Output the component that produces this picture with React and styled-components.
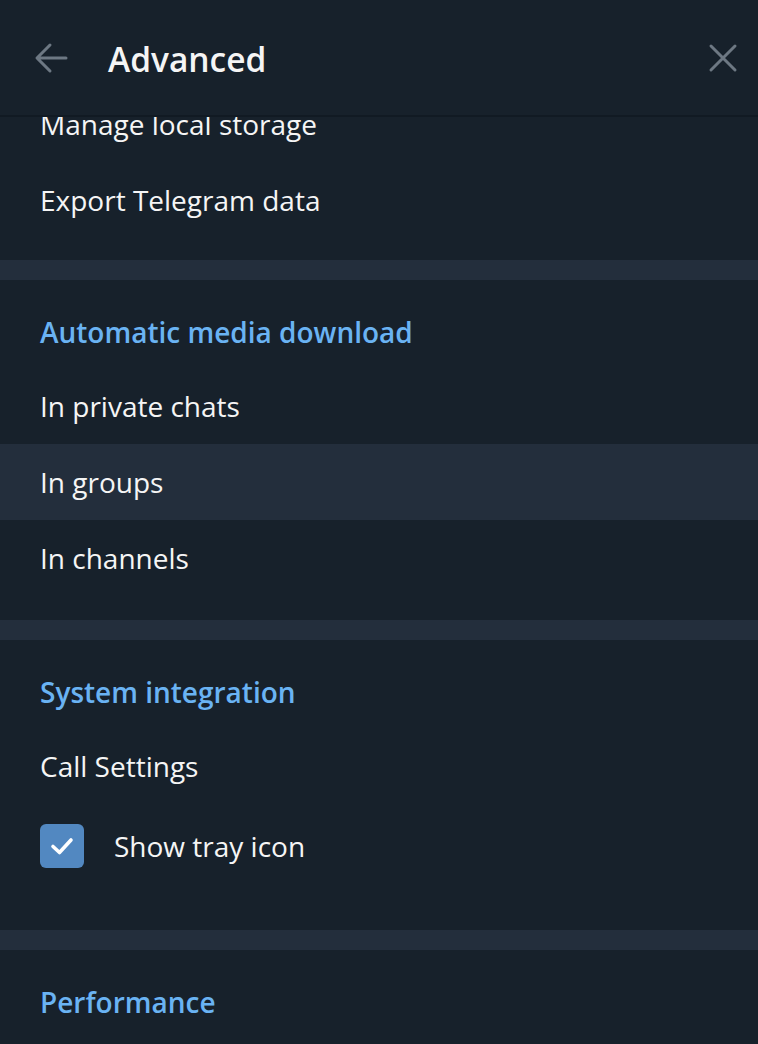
import React, { useState } from "react";
import styled, { createGlobalStyle } from "styled-components";

const GlobalStyle = createGlobalStyle`
  html, body {
    margin: 0;
    padding: 0;
    background: #17212b;
  }
  body {
    font-family: "Open Sans", "Noto Sans", sans-serif;
    -webkit-font-smoothing: antialiased;
  }
`;

const sections = [
  {
    rows: ["Manage local storage", "Export Telegram data"],
  },
  {
    title: "Automatic media download",
    rows: ["In private chats", "In groups", "In channels"],
  },
  {
    title: "System integration",
    rows: ["Call Settings"],
    checks: [{ label: "Show tray icon", checked: true }],
  },
  {
    title: "Performance",
    rows: [],
  },
];

const App = () => {
  const [hovered, setHovered] = useState("In groups");
  const [checks, setChecks] = useState({ "Show tray icon": true });

  return (
    <>
      <GlobalStyle />
      <Panel>
        <Header>
          <IconButton aria-label="Back">
            <svg width="34" height="32" viewBox="0 0 34 32" fill="none">
              <path
                d="M32 16H4M16 3L3 16l13 13"
                stroke="#6d7883"
                strokeWidth="3"
                strokeLinecap="round"
                strokeLinejoin="round"
              />
            </svg>
          </IconButton>
          <Title>Advanced</Title>
          <CloseButton aria-label="Close">
            <svg width="30" height="30" viewBox="0 0 30 30" fill="none">
              <path
                d="M3 3l24 24M27 3L3 27"
                stroke="#6d7883"
                strokeWidth="3"
                strokeLinecap="round"
              />
            </svg>
          </CloseButton>
        </Header>
        <Scroll>
          <Content>
            {sections.map((section, i) => (
              <React.Fragment key={i}>
                {i > 0 && <Divider />}
                <Section>
                  {section.title && <SectionTitle>{section.title}</SectionTitle>}
                  {section.rows.map((row) => (
                    <Row
                      key={row}
                      $active={hovered === row}
                      onMouseEnter={() => setHovered(row)}
                    >
                      {row}
                    </Row>
                  ))}
                  {section.checks &&
                    section.checks.map((c) => (
                      <CheckRow
                        key={c.label}
                        onClick={() =>
                          setChecks({ ...checks, [c.label]: !checks[c.label] })
                        }
                      >
                        <Box $checked={checks[c.label]}>
                          {checks[c.label] && (
                            <svg width="26" height="22" viewBox="0 0 26 22" fill="none">
                              <path
                                d="M4 11.5l6.5 6L22 5"
                                stroke="#ffffff"
                                strokeWidth="3.6"
                                strokeLinecap="round"
                                strokeLinejoin="round"
                              />
                            </svg>
                          )}
                        </Box>
                        <CheckLabel>{c.label}</CheckLabel>
                      </CheckRow>
                    ))}
                </Section>
              </React.Fragment>
            ))}
          </Content>
        </Scroll>
      </Panel>
    </>
  );
};

export default App;

const Panel = styled.div`
  width: 758px;
  height: 1044px;
  display: flex;
  flex-direction: column;
  background: #17212b;
  overflow: hidden;
`;

const Header = styled.header`
  height: 115px;
  flex-shrink: 0;
  display: flex;
  align-items: center;
  padding: 0 20px 0 34px;
  border-bottom: 2px solid #111a23;
  background: #17212b;
  position: relative;
  z-index: 1;
`;

const IconButton = styled.button`
  display: flex;
  align-items: center;
  justify-content: center;
  background: none;
  border: none;
  padding: 0;
  cursor: pointer;
`;

const CloseButton = styled(IconButton)`
  margin-left: auto;
`;

const Title = styled.h1`
  margin: 2px 0 0 40px;
  font-size: 33.5px;
  font-weight: 600;
  color: #f5f5f5;
`;

const Scroll = styled.div`
  flex: 1;
  overflow: hidden;
`;

const Content = styled.div`
  margin-top: -31px;
`;

const Section = styled.section`
  padding: 16px 0 24px;
  &:first-child {
    padding: 0 0 22px;
  }
`;

const Divider = styled.div`
  height: 20px;
  background: #232e3c;
`;

const SectionTitle = styled.div`
  height: 72px;
  display: flex;
  align-items: center;
  padding: 0 40px;
  font-size: 28px;
  font-weight: 600;
  color: #6ab3f3;
`;

const Row = styled.div`
  height: 76px;
  display: flex;
  align-items: center;
  padding: 0 40px;
  font-size: 28px;
  color: #f5f5f5;
  cursor: pointer;
  background: ${({ $active }) => ($active ? "#232e3c" : "transparent")};
`;

const CheckRow = styled.label`
  height: 84px;
  margin-bottom: 18px;
  display: flex;
  align-items: center;
  padding: 0 40px;
  gap: 30px;
  cursor: pointer;
`;

const Box = styled.span`
  width: 44px;
  height: 44px;
  border-radius: 6px;
  display: flex;
  align-items: center;
  justify-content: center;
  background: ${({ $checked }) => ($checked ? "#5288c1" : "transparent")};
  border: ${({ $checked }) => ($checked ? "none" : "3px solid #6d7883")};
  box-sizing: border-box;
`;

const CheckLabel = styled.span`
  font-size: 28px;
  color: #f5f5f5;
`;
